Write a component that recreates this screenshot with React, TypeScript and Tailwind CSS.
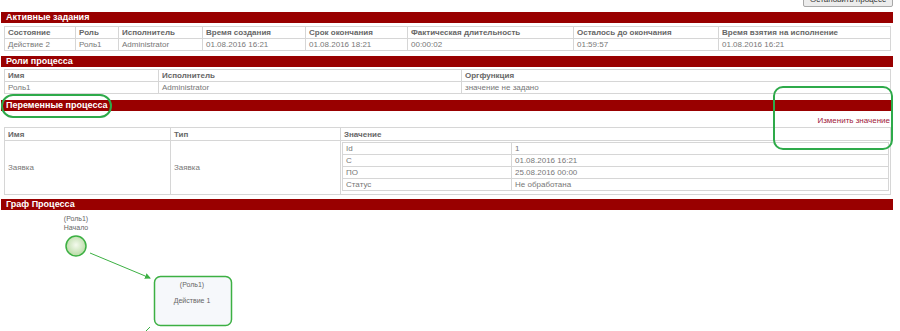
const cell = "border border-[#d6d6d6] px-[3px] h-[12px] leading-[11px] text-left align-middle whitespace-nowrap";
const head = cell + " font-bold text-[#666]";

function Bar({ title }: { title: string }) {
  return (
    <div className="ml-[1px] w-[892px] h-[11px] bg-[#990000] text-white font-bold text-[9px] leading-[11px] pl-[5px]">
      {title}
    </div>
  );
}

function Table({ cols, headers, rows }: { cols: number[]; headers: string[]; rows: string[][] }) {
  return (
    <table className="ml-[4px] w-[886px] table-fixed border-collapse border border-[#c8c8c8]">
      <colgroup>
        {cols.map((w, i) => (
          <col key={i} style={{ width: w }} />
        ))}
      </colgroup>
      <thead>
        <tr>
          {headers.map((h) => (
            <th key={h} className={head}>{h}</th>
          ))}
        </tr>
      </thead>
      <tbody>
        {rows.map((r, i) => (
          <tr key={i}>
            {r.map((c, j) => (
              <td key={j} className={cell}>{c}</td>
            ))}
          </tr>
        ))}
      </tbody>
    </table>
  );
}

const vars = [
  ["Id", "1"],
  ["С", "01.08.2016 16:21"],
  ["ПО", "25.08.2016 00:00"],
  ["Статус", "Не обработана"],
];

export default function App() {
  return (
    <div className="relative w-[900px] h-[331px] overflow-hidden bg-white font-['Liberation_Sans',Arial,sans-serif] text-[8px] text-[#777]">
      <div className="h-[12px] flex justify-end pr-[7px]">
        <button className="mt-[-8px] h-[15px] w-[90px] border border-[#a8a8a8] bg-[#ececec] rounded-[2px] text-[8px] text-[#333] leading-[13px]">
          Остановить процесс
        </button>
      </div>

      <Bar title="Активные задания" />
      <div className="h-[3px]" />
      <Table
        cols={[71, 43, 84, 103, 102, 166, 145, 172]}
        headers={["Состояние", "Роль", "Исполнитель", "Время создания", "Срок окончания", "Фактическая длительность", "Осталось до окончания", "Время взятия на исполнение"]}
        rows={[["Действие 2", "Роль1", "Administrator", "01.08.2016 16:21", "01.08.2016 18:21", "00:00:02", "01:59:57", "01.08.2016 16:21"]]}
      />
      <div className="h-[5px]" />

      <Bar title="Роли процесса" />
      <div className="h-[2px]" />
      <Table
        cols={[154, 303, 429]}
        headers={["Имя", "Исполнитель", "Оргфункция"]}
        rows={[["Роль1", "Administrator", "значение не задано"]]}
      />
      <div className="h-[6px]" />

      <Bar title="Переменные процесса" />
      <div className="h-[16px] flex items-center justify-end pr-[10px] pt-[3px] text-[#a0203a]">Изменить значение</div>
      <table className="ml-[4px] w-[886px] table-fixed border-collapse border border-[#c8c8c8]">
        <colgroup>
          <col style={{ width: 166 }} />
          <col style={{ width: 170 }} />
          <col style={{ width: 550 }} />
        </colgroup>
        <thead>
          <tr>
            <th className={head + " h-[13px]"}>Имя</th>
            <th className={head + " h-[13px]"}>Тип</th>
            <th className={head + " h-[13px]"}>Значение</th>
          </tr>
        </thead>
        <tbody>
          <tr>
            <td className={cell}>Заявка</td>
            <td className={cell}>Заявка</td>
            <td className="border border-[#d6d6d6] p-[1px] pb-[3px]">
              <table className="w-full table-fixed border-collapse border border-[#c8c8c8]">
                <colgroup>
                  <col style={{ width: 169 }} />
                  <col />
                </colgroup>
                <tbody>
                  {vars.map(([k, v]) => (
                    <tr key={k}>
                      <td className={cell}>{k}</td>
                      <td className={cell}>{v}</td>
                    </tr>
                  ))}
                </tbody>
              </table>
            </td>
          </tr>
        </tbody>
      </table>
      <div className="h-[4px]" />

      <Bar title="Граф Процесса" />
      <div className="relative h-[130px]">
        <svg className="absolute left-0 top-0" width="300" height="130">
          <defs>
            <radialGradient id="g" cx="50%" cy="45%" r="55%">
              <stop offset="0%" stopColor="#f4faee" />
              <stop offset="100%" stopColor="#b9dba5" />
            </radialGradient>
            <marker id="a" markerWidth="6" markerHeight="6" refX="5" refY="3" orient="auto">
              <path d="M0,0 L6,3 L0,6 z" fill="#3cb043" />
            </marker>
          </defs>
          <text x="76" y="11" textAnchor="middle" fontSize="7" fill="#666" fontFamily="Liberation Sans, Arial, sans-serif">(Роль1)</text>
          <text x="76" y="20" textAnchor="middle" fontSize="7" fill="#666" fontFamily="Liberation Sans, Arial, sans-serif">Начало</text>
          <circle cx="76" cy="36" r="10" fill="url(#g)" stroke="#3cb043" strokeWidth="1.5" />
          <line x1="90" y1="43" x2="150" y2="68" stroke="#3cb043" strokeWidth="1" markerEnd="url(#a)" />
          <rect x="154.5" y="66.5" width="77" height="49" rx="6" fill="#f6f8fb" stroke="#3cb043" strokeWidth="1.5" />
          <text x="192" y="77" textAnchor="middle" fontSize="7" fill="#666" fontFamily="Liberation Sans, Arial, sans-serif">(Роль1)</text>
          <text x="192" y="93" textAnchor="middle" fontSize="7" fill="#666" fontFamily="Liberation Sans, Arial, sans-serif">Действие 1</text>
          <line x1="150" y1="117" x2="143" y2="124" stroke="#3cb043" strokeWidth="1" />
        </svg>
      </div>

      <div className="absolute left-[1px] top-[94px] w-[111px] h-[24px] rounded-[12px] border-2 border-[#2eaa4a]" />
      <div className="absolute left-[773px] top-[86px] w-[120px] h-[64px] rounded-[10px] border-2 border-[#2eaa4a]" />
    </div>
  );
}
